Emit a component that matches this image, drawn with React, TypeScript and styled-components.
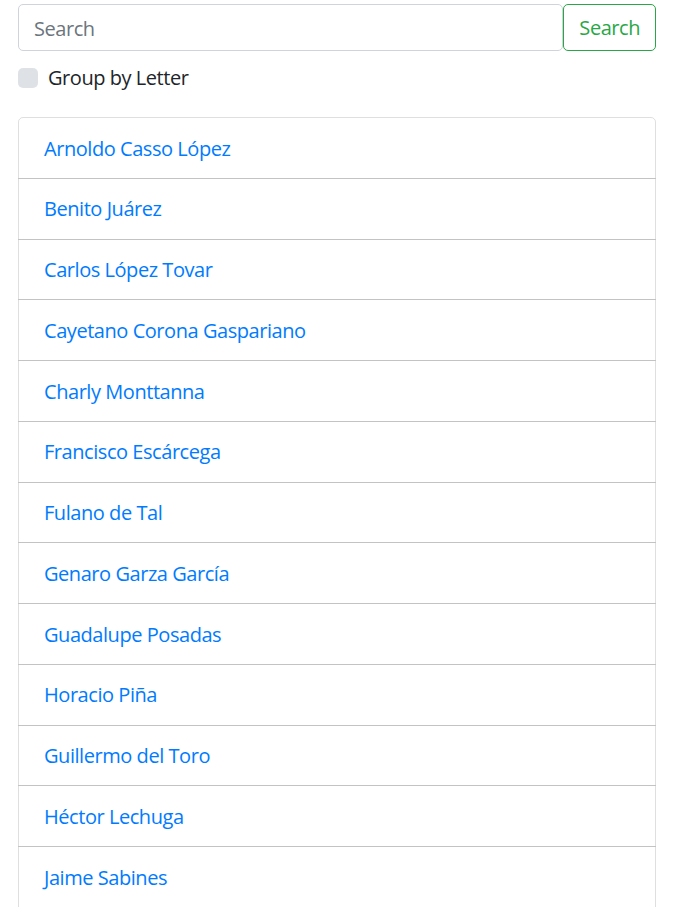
import React from "react";
import styled, { createGlobalStyle } from "styled-components";

const Global = createGlobalStyle`
  html, body { margin: 0; padding: 0; background: #fff; }
  body { font-family: "Open Sans", "Liberation Sans", sans-serif; font-size: 20px; line-height: 1.5; color: #212529; letter-spacing: -0.45px; }
  * { box-sizing: border-box; }
`;

const Page = styled.div`
  padding: 4px 22px 0 18px;
`;

const SearchRow = styled.form`
  display: flex;
  align-items: center;
`;

const SearchInput = styled.input`
  flex: 1;
  height: 47px;
  padding: 8px 15px 7px;
  font: inherit;
  font-size: 20px;
  letter-spacing: -0.45px;
  color: #495057;
  border: 1px solid #ced4da;
  border-radius: 5px;
  background: #fff;
  outline: none;
  &::placeholder { color: #6c757d; }
`;

const SearchButton = styled.button`
  height: 47px;
  padding: 8px 15px 7px;
  font: inherit;
  font-size: 20px;
  letter-spacing: -0.45px;
  color: #28a745;
  background: transparent;
  border: 1px solid #28a745;
  border-radius: 5px;
`;

const CheckRow = styled.label`
  display: flex;
  align-items: flex-start;
  margin-top: 12px;
  height: 30px;
  line-height: 30px;
`;

const Box = styled.span`
  width: 20px;
  height: 20px;
  margin-top: 5px;
  border-radius: 5px;
  background: #dee2e6;
  margin-right: 10px;
`;

const List = styled.ul`
  list-style: none;
  margin: 24px 0 0;
  padding: 0;
  border-radius: 5px;
`;

const Item = styled.li`
  padding: 15.5px 25px 14.25px;
  border: 1px solid rgba(0, 0, 0, 0.125);
  margin-bottom: -1px;
  line-height: 30px;
  &:first-child { border-top-left-radius: 5px; border-top-right-radius: 5px; }
`;

const Link = styled.a`
  color: #007bff;
  text-decoration: none;
`;

const names = [
  "Arnoldo Casso López",
  "Benito Juárez",
  "Carlos López Tovar",
  "Cayetano Corona Gaspariano",
  "Charly Monttanna",
  "Francisco Escárcega",
  "Fulano de Tal",
  "Genaro Garza García",
  "Guadalupe Posadas",
  "Horacio Piña",
  "Guillermo del Toro",
  "Héctor Lechuga",
  "Jaime Sabines",
];

export default function App() {
  return (
    <Page>
      <Global />
      <SearchRow onSubmit={(e) => e.preventDefault()}>
        <SearchInput placeholder="Search" />
        <SearchButton type="submit">Search</SearchButton>
      </SearchRow>
      <CheckRow>
        <Box />
        Group by Letter
      </CheckRow>
      <List>
        {names.map((n) => (
          <Item key={n}>
            <Link href="#">{n}</Link>
          </Item>
        ))}
      </List>
    </Page>
  );
}
